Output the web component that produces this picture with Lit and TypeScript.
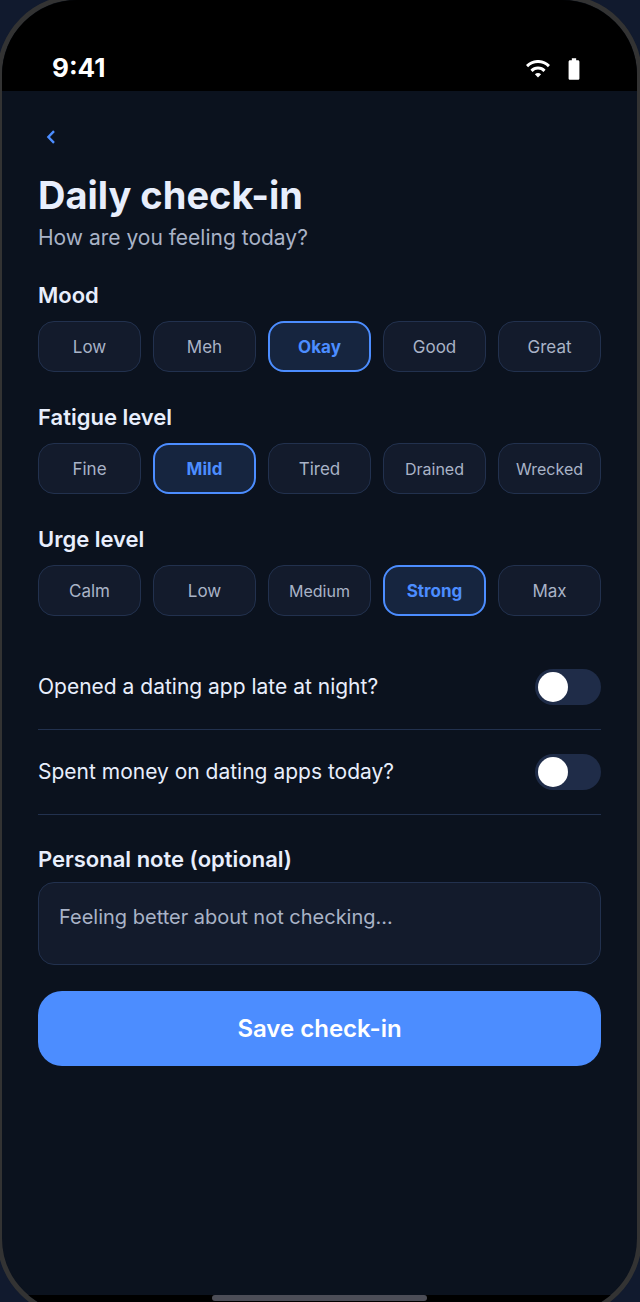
import { LitElement, html, css } from "lit";
import { customElement, property, state } from "lit/decorators.js";

interface Option {
  label: string;
  small?: boolean;
}

@customElement("choice-group")
class ChoiceGroup extends LitElement {
  @property() legend = "";
  @property() name = "";
  @property({ attribute: false }) options: Option[] = [];
  @property() value = "";

  static styles = css`
    :host {
      display: block;
    }
    .group {
      border: 0;
      margin: 0;
      padding: 0;
      min-width: 0;
    }
    .legend {
      padding: 0;
      margin-bottom: 12px;
      font-size: 22px;
      line-height: 28px;
      font-weight: 600;
      color: #e8eefc;
    }
    .chips {
      display: grid;
      grid-template-columns: repeat(5, minmax(0, 1fr));
      gap: 12px;
    }
    .chip {
      display: grid;
      place-items: center;
      box-sizing: border-box;
      height: 51px;
      border: 1px solid #22314e;
      border-radius: 16px;
      background: #131b2c;
      color: #a9b3c7;
      font-size: 17px;
      line-height: 24px;
      cursor: pointer;
    }
    .chip.small {
      font-size: 16px;
    }
    .chip.selected {
      border: 2px solid #4c8dff;
      background: #16253f;
      color: #4c8dff;
      font-weight: 700;
    }
    .radio,
    .text {
      grid-area: 1 / 1;
    }
    .radio {
      appearance: none;
      width: 1px;
      height: 1px;
      margin: 0;
      outline: none;
    }
    .chip:focus-within:has(:focus-visible) {
      outline: 2px solid #e8eefc;
    }
  `;

  render() {
    return html`
      <fieldset class="group">
        <legend class="legend">${this.legend}</legend>
        <div class="chips">
          ${this.options.map(
            (o) => html`
              <label
                class="chip ${o.small ? "small" : ""} ${o.label === this.value ? "selected" : ""}"
              >
                <input
                  class="radio"
                  type="radio"
                  name=${this.name}
                  .value=${o.label}
                  .checked=${o.label === this.value}
                  @change=${() => (this.value = o.label)}
                />
                <span class="text">${o.label}</span>
              </label>
            `
          )}
        </div>
      </fieldset>
    `;
  }
}

@customElement("toggle-row")
class ToggleRow extends LitElement {
  @property() label = "";

  static styles = css`
    :host {
      display: block;
      border-bottom: 1px solid #22314e;
    }
    .row {
      display: flex;
      align-items: center;
      justify-content: space-between;
      gap: 16px;
      padding: 24px 0;
      font-size: 21px;
      line-height: 28px;
      color: #e8eefc;
    }
    .switch {
      appearance: none;
      flex: none;
      display: flex;
      box-sizing: border-box;
      width: 66px;
      height: 36px;
      margin: 0;
      padding: 3px;
      border-radius: 18px;
      background: #1f2c48;
      cursor: pointer;
    }
    .switch::before {
      content: "";
      width: 30px;
      height: 30px;
      border-radius: 50%;
      background: #fff;
    }
    .switch:checked {
      background: #4c8dff;
      justify-content: flex-end;
    }
  `;

  render() {
    return html`
      <label class="row">
        <span>${this.label}</span>
        <input class="switch" type="checkbox" role="switch" />
      </label>
    `;
  }
}

@customElement("app-root")
class AppRoot extends LitElement {
  @state() private note = "";

  static styles = css`
    :host {
      display: flex;
      min-height: 100vh;
      overflow: hidden;
      background: #111a2e;
      font-family: Inter, "Liberation Sans", sans-serif;
    }
    .device {
      flex: 1;
      display: flex;
      flex-direction: column;
      min-width: 0;
      margin: -5px -2px -16px -3px;
      border: 5px solid #333;
      border-radius: 80px;
      overflow: hidden;
      background: #0b121e;
    }
    .status {
      display: flex;
      align-items: flex-end;
      justify-content: space-between;
      box-sizing: border-box;
      height: 91px;
      padding: 0 50px 9px;
      background: #000;
      color: #fff;
    }
    .time {
      font-size: 26px;
      line-height: 28px;
      font-weight: 700;
    }
    .indicators {
      display: flex;
      align-items: center;
      gap: 11px;
    }
    .icon {
      display: block;
    }
    .screen {
      flex: 1;
      padding: 32px 36px 36px;
    }
    .back {
      display: grid;
      place-items: center;
      width: 26px;
      height: 28px;
      margin: 0;
      padding: 0;
      border: 0;
      background: none;
      color: #4c8dff;
      cursor: pointer;
    }
    .title {
      margin: 20px 0 0;
      font-size: 38px;
      line-height: 48px;
      font-weight: 700;
      color: #e8eefc;
    }
    .subtitle {
      margin: 5px 0 29px;
      font-size: 21px;
      line-height: 28px;
      color: #a9b3c7;
    }
    .groups {
      display: flex;
      flex-direction: column;
      gap: 31px;
    }
    .toggles {
      margin: 29px 0 30px;
    }
    .note-label {
      display: block;
      margin-bottom: 9px;
      font-size: 22px;
      line-height: 28px;
      font-weight: 600;
      color: #e8eefc;
    }
    .note {
      display: block;
      box-sizing: border-box;
      width: 100%;
      height: 83px;
      padding: 20px;
      border: 1px solid #22314e;
      border-radius: 16px;
      background: #131b2c;
      color: #e8eefc;
      font-family: inherit;
      font-size: 20px;
      line-height: 28px;
      resize: none;
      outline: none;
    }
    .note::placeholder {
      color: #a9b3c7;
      opacity: 1;
    }
    .save {
      display: block;
      width: 100%;
      height: 75px;
      margin-top: 26px;
      border: 0;
      border-radius: 24px;
      background: #4c8dff;
      color: #fff;
      font-family: inherit;
      font-size: 24px;
      font-weight: 600;
      cursor: pointer;
    }
    .home {
      display: flex;
      justify-content: center;
      height: 18px;
      background: #000;
    }
    .home-bar {
      width: 34%;
      height: 6px;
      border-radius: 3px;
      background: #4c4d57;
    }
  `;

  private mood: Option[] = [
    { label: "Low" },
    { label: "Meh" },
    { label: "Okay" },
    { label: "Good" },
    { label: "Great" },
  ];

  private fatigue: Option[] = [
    { label: "Fine" },
    { label: "Mild" },
    { label: "Tired" },
    { label: "Drained", small: true },
    { label: "Wrecked", small: true },
  ];

  private urge: Option[] = [
    { label: "Calm" },
    { label: "Low" },
    { label: "Medium", small: true },
    { label: "Strong" },
    { label: "Max" },
  ];

  render() {
    return html`
      <div class="device">
        <header class="status">
          <span class="time">9:41</span>
          <div class="indicators">
            <svg class="icon" width="24" height="18" viewBox="0 0 24 18" fill="none" aria-hidden="true">
              <path d="M1 6.1A15.4 15.4 0 0 1 23 6.1" stroke="currentColor" stroke-width="3" />
              <path d="M5.5 10.9A9 9 0 0 1 18.5 10.9" stroke="currentColor" stroke-width="3" />
              <path d="M8.9 14.3A4.6 4.6 0 0 1 15.1 14.3L12 17.4Z" fill="currentColor" />
            </svg>
            <svg class="icon" width="26" height="26" viewBox="0 0 24 24" fill="currentColor" aria-hidden="true">
              <path
                d="M15.67 4H14V2h-4v2H8.33C7.6 4 7 4.6 7 5.33v15.33C7 21.4 7.6 22 8.33 22h7.33c.74 0 1.34-.6 1.34-1.33V5.33C17 4.6 16.4 4 15.67 4z"
              />
            </svg>
          </div>
        </header>

        <main class="screen">
          <button class="back" type="button" aria-label="Back">
            <svg class="icon" width="10" height="14" viewBox="0 0 10 14" fill="none" aria-hidden="true">
              <path d="M8 1.2L2.4 7L8 12.8" stroke="currentColor" stroke-width="2.4" />
            </svg>
          </button>
          <h1 class="title">Daily check-in</h1>
          <p class="subtitle">How are you feeling today?</p>

          <div class="groups">
            <choice-group legend="Mood" name="mood" value="Okay" .options=${this.mood}></choice-group>
            <choice-group
              legend="Fatigue level"
              name="fatigue"
              value="Mild"
              .options=${this.fatigue}
            ></choice-group>
            <choice-group legend="Urge level" name="urge" value="Strong" .options=${this.urge}></choice-group>
          </div>

          <div class="toggles">
            <toggle-row label="Opened a dating app late at night?"></toggle-row>
            <toggle-row label="Spent money on dating apps today?"></toggle-row>
          </div>

          <label class="note-label" for="note">Personal note (optional)</label>
          <textarea
            class="note"
            id="note"
            placeholder="Feeling better about not checking..."
            .value=${this.note}
            @input=${(e: Event) => (this.note = (e.target as HTMLTextAreaElement).value)}
          ></textarea>
          <button class="save" type="button">Save check-in</button>
        </main>

        <footer class="home"><div class="home-bar"></div></footer>
      </div>
    `;
  }
}
